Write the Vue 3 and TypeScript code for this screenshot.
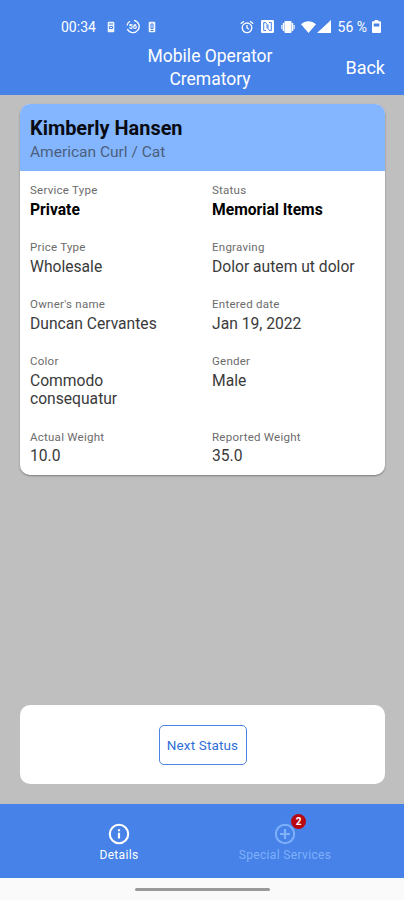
<script setup lang="ts">
interface Field {
  label: string
  value: string
  strong?: boolean
}

const fields: Field[] = [
  { label: 'Service Type', value: 'Private', strong: true },
  { label: 'Status', value: 'Memorial Items', strong: true },
  { label: 'Price Type', value: 'Wholesale' },
  { label: 'Engraving', value: 'Dolor autem ut dolor' },
  { label: "Owner's name", value: 'Duncan Cervantes' },
  { label: 'Entered date', value: 'Jan 19, 2022' },
  { label: 'Color', value: 'Commodo consequatur' },
  { label: 'Gender', value: 'Male' },
  { label: 'Actual Weight', value: '10.0' },
  { label: 'Reported Weight', value: '35.0' },
]
</script>

<template>
  <div class="screen">
    <div class="status-bar">
      <div class="status-left">
        <span class="clock">00:34</span>
        <svg class="sim" width="8" height="12" viewBox="0 0 8 12">
          <rect x="0.7" y="0.7" width="6.6" height="10.6" rx="1" fill="#fff" fill-opacity=".9" />
          <path d="M2 3h4M2.5 5.5h3v2h-3z" fill="none" stroke="#4682e8" stroke-width="1" />
        </svg>
        <svg class="gauge" width="14" height="15" viewBox="0 0 14 15">
          <path d="M8 1.3A6.2 6.2 0 1 1 1.3 10M1 6.5A6.2 6.2 0 0 1 4 2.2" fill="none" stroke="#fff" stroke-width="1.3" />
          <text x="6.7" y="10" text-anchor="middle" font-size="7" font-weight="700" fill="#fff">56</text>
        </svg>
        <svg class="sim" width="8" height="12" viewBox="0 0 8 12">
          <rect x="0.7" y="0.7" width="6.6" height="10.6" rx="1" fill="#fff" fill-opacity=".9" />
          <path d="M5 3H3v4.5h2zM2.5 9.5h3" fill="none" stroke="#4682e8" stroke-width="1" />
        </svg>
      </div>
      <div class="status-right">
        <svg width="14" height="14" viewBox="0 0 14 14" fill="none" stroke="#fff" stroke-width="1.3">
          <circle cx="7" cy="7.8" r="4.8" />
          <path d="M.8 3.8 3.9 1.2M13.2 3.8l-3.1-2.6M7 5v3l2 1.2" />
        </svg>
        <svg class="nfc" width="13" height="13" viewBox="0 0 13 13">
          <rect width="13" height="13" rx="1.2" fill="#fff" />
          <path d="M5 10.5H2.7V2.5h1.8L6 4.5v4M8 2.5h2.3v8H8.5L7 8.5v-4" fill="none" stroke="#4682e8" stroke-width="1" />
        </svg>
        <svg class="vibrate" width="14" height="12" viewBox="0 0 14 12" fill="#fff">
          <rect x="3.4" width="7.2" height="12" rx="1.2" />
          <path d="M1.7 2h1.3v8H1.7zM.3 4h1v4h-1zM11 2h1.3v8H11zM12.7 4h1v4h-1z" />
        </svg>
        <svg class="wifi" width="15" height="12" viewBox="0 0 15 12">
          <path d="M0 3.2C4.5-.8 10.5-.8 15 3.2L7.5 12z" fill="#fff" />
        </svg>
        <svg class="signal" width="14" height="13" viewBox="0 0 14 13">
          <path d="M14 0v13H0z" fill="#fff" />
        </svg>
        <span class="percent">56 %</span>
        <svg class="battery" width="9" height="13" viewBox="0 0 9 13">
          <path d="M2.7 0h3.6v1.3H8q1 0 1 1V12q0 1-1 1H1q-1 0-1-1V2.3q0-1 1-1h1.7z" fill="#fff" />
          <path d="M1.7 3.5h5.6v3H1.7z" fill="#4682e8" />
        </svg>
      </div>
    </div>

    <header class="header">
      <h1 class="title">Mobile Operator Crematory</h1>
      <button class="back" type="button">Back</button>
    </header>

    <main class="content">
      <section class="card">
        <div class="card-head">
          <h2 class="name">Kimberly Hansen</h2>
          <p class="breed">American Curl / Cat</p>
        </div>
        <dl class="fields">
          <div v-for="field in fields" :key="field.label" class="field">
            <dt>{{ field.label }}</dt>
            <dd :class="{ strong: field.strong }">{{ field.value }}</dd>
          </div>
        </dl>
      </section>

      <section class="actions">
        <button class="next" type="button">Next Status</button>
      </section>
    </main>

    <nav class="tabs">
      <a class="tab active">
        <span class="tab-icon">
          <svg width="22" height="22" viewBox="0 0 22 22" fill="none" stroke="currentColor">
            <circle cx="11" cy="11" r="9.2" stroke-width="2.1" />
            <path d="M11 9.8v5.7M11 6.2v2" stroke-width="2.2" />
          </svg>
        </span>
        <span class="tab-label">Details</span>
      </a>
      <a class="tab">
        <span class="tab-icon">
          <svg width="22" height="22" viewBox="0 0 22 22" fill="none" stroke="currentColor">
            <circle cx="11" cy="11" r="9.2" stroke-width="2" />
            <path d="M11 6v10M6 11h10" stroke-width="2.2" />
          </svg>
          <span class="badge">2</span>
        </span>
        <span class="tab-label">Special Services</span>
      </a>
    </nav>

    <div class="gesture"><span class="handle"></span></div>
  </div>
</template>

<style>
body {
  margin: 0;
}
</style>

<style scoped>
.screen {
  display: flex;
  flex-direction: column;
  width: 404px;
  height: 900px;
  overflow: hidden;
  background: #bfbfbf;
  font-family: Roboto, "Liberation Sans", sans-serif;
}
h1, h2, p, dl, dd {
  margin: 0;
}
button {
  font-family: inherit;
  background: none;
  cursor: pointer;
}
.status-bar {
  display: flex;
  flex: none;
  justify-content: space-between;
  box-sizing: border-box;
  height: 42px;
  padding: 10px 23px 0 61px;
  background: #4682e8;
  color: #fff;
}
.status-left,
.status-right {
  display: flex;
  align-items: center;
  height: 33px;
}
.clock {
  width: 46px;
  font-size: 14px;
}
.gauge {
  margin: 0 8px 0 11px;
}
.nfc {
  margin-left: 7px;
}
.vibrate {
  margin-left: 7px;
}
.wifi {
  margin-left: 6px;
}
.signal {
  margin-left: 1px;
}
.percent {
  margin-left: 7px;
  font-size: 14px;
  white-space: nowrap;
}
.battery {
  margin-left: 5px;
}
.header {
  display: grid;
  flex: none;
  grid-template-columns: 1fr 160px 1fr;
  height: 53px;
  background: #4682e8;
  color: #fff;
}
.title {
  grid-column: 2;
  margin-left: 16px;
  margin-top: 3px;
  font-size: 17.5px;
  font-weight: 400;
  line-height: 23.4px;
  text-align: center;
}
.back {
  justify-self: end;
  align-self: center;
  margin: 0 19px 2px 0;
  padding: 0;
  border: 0;
  color: #fff;
  font-size: 18px;
}
.content {
  display: flex;
  flex: 1;
  flex-direction: column;
  justify-content: space-between;
  padding: 9px 19px 20px 20px;
}
.card {
  overflow: hidden;
  border-radius: 10px;
  background: #fff;
  box-shadow: 0 1px 2px rgba(0, 0, 0, 0.35);
}
.card-head {
  box-sizing: border-box;
  height: 67px;
  padding: 13px 10px 0;
  background: #83b6ff;
}
.name {
  color: #080b12;
  font-size: 19.9px;
  font-weight: 700;
  line-height: 24px;
}
.breed {
  color: #4c5f7c;
  font-size: 15.5px;
  line-height: 23px;
}
.fields {
  display: grid;
  grid-template-columns: 1fr 1fr;
  row-gap: 19.8px;
  padding: 11px 0 9.2px 10px;
}
.field {
  padding-right: 24px;
}
.field:nth-child(even) {
  padding-left: 4.5px;
  padding-right: 0;
}
dt {
  margin-bottom: 2.6px;
  color: #6c6c6c;
  font-size: 11.5px;
  letter-spacing: 0.25px;
  line-height: 16px;
}
dd {
  color: #3a3a3a;
  font-size: 15.65px;
  line-height: 18.6px;
}
dd.strong {
  color: #000;
  font-weight: 700;
}
.actions {
  display: flex;
  align-items: center;
  justify-content: center;
  height: 79px;
  border-radius: 10px;
  background: #fff;
}
.next {
  width: 88px;
  height: 40px;
  padding: 1px 0 0;
  border: 1px solid #4a83e2;
  border-radius: 5px;
  color: #2f6fd6;
  font-size: 13.5px;
  letter-spacing: 0.15px;
}
.tabs {
  display: flex;
  flex: none;
  box-sizing: border-box;
  height: 74px;
  padding: 0 36px;
  background: #4682e8;
}
.tab {
  display: flex;
  flex: 1;
  flex-direction: column;
  align-items: center;
  padding-top: 19px;
  color: #7fb0fa;
}
.tab.active {
  color: #fff;
}
.tab-icon {
  position: relative;
  height: 22px;
}
.tab-label {
  margin-top: 3px;
  font-size: 12px;
  letter-spacing: 0.35px;
  line-height: 15px;
}
.badge {
  position: absolute;
  top: -9px;
  left: 17px;
  width: 15px;
  height: 15px;
  border-radius: 50%;
  background: #b9080e;
  color: #fff;
  font-size: 10px;
  font-weight: 700;
  line-height: 15px;
  text-align: center;
}
.gesture {
  display: flex;
  flex: none;
  align-items: center;
  justify-content: center;
  box-sizing: border-box;
  height: 22px;
  padding: 1px 0 0 1px;
  background: #fafafa;
}
.handle {
  width: 135px;
  height: 3px;
  border-radius: 2px;
  background: #999;
}
</style>
